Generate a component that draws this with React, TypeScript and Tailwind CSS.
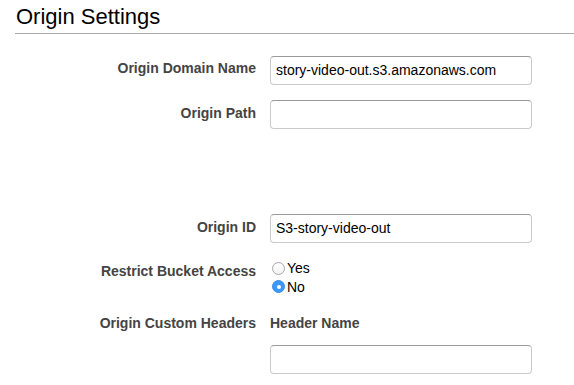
import React from "react";

const labelCls =
  "w-[241px] shrink-0 text-right text-[14px] leading-[16px] font-bold text-[#444]";

function TextInput({ value = "" }: { value?: string }) {
  return (
    <div className="ml-[14px] w-[262px] h-[29px] rounded-[4px] border border-[#cacaca] border-t-[#9a9a9a] bg-white flex items-center pl-[5px] text-[14px] text-black">
      {value}
    </div>
  );
}

function Radio({ checked, label }: { checked?: boolean; label: string }) {
  return (
    <div className="flex items-center h-[18.5px]">
      {checked ? (
        <span className="w-[13px] h-[13px] rounded-full bg-[#3b99fc] border border-[#3a8ee6] flex items-center justify-center">
          <span className="w-[4px] h-[4px] rounded-full bg-white" />
        </span>
      ) : (
        <span className="w-[13px] h-[13px] rounded-full border border-[#a8a8a8] bg-gradient-to-b from-white to-[#f3f3f3]" />
      )}
      <span className="ml-[2px] text-[14px] leading-[18px] text-black">{label}</span>
    </div>
  );
}

export default function App() {
  return (
    <div
      className="w-[574px] h-[385px] bg-white overflow-hidden pl-[15px]"
      style={{ fontFamily: '"Liberation Sans", Arial, Helvetica, sans-serif' }}
    >
      <div className="h-[34px] border-b border-[#aaaaaa] flex items-start">
        <h2 className="text-[22px] leading-[24px] text-black pt-[5px] pl-[1px]">Origin Settings</h2>
      </div>

      <div className="flex items-start mt-[22px]">
        <div className={labelCls + " pt-[4px]"}>Origin Domain Name</div>
        <TextInput value="story-video-out.s3.amazonaws.com" />
      </div>

      <div className="flex items-start mt-[15px]">
        <div className={labelCls + " pt-[5px]"}>Origin Path</div>
        <TextInput />
      </div>

      <div className="flex items-start mt-[85px]">
        <div className={labelCls + " pt-[5px]"}>Origin ID</div>
        <TextInput value="S3-story-video-out" />
      </div>

      <div className="flex items-start mt-[16px]">
        <div className={labelCls + " pt-[4px]"}>Restrict Bucket Access</div>
        <div className="ml-[16px] flex flex-col">
          <Radio label="Yes" />
          <Radio checked label="No" />
        </div>
      </div>

      <div className="flex items-start mt-[19px]">
        <div className={labelCls}>Origin Custom Headers</div>
        <div className="ml-[14px] text-[14px] leading-[16px] font-bold text-[#444]">Header Name</div>
      </div>

      <div className="flex items-start mt-[14px]">
        <div className="w-[241px] shrink-0" />
        <TextInput />
      </div>
    </div>
  );
}
